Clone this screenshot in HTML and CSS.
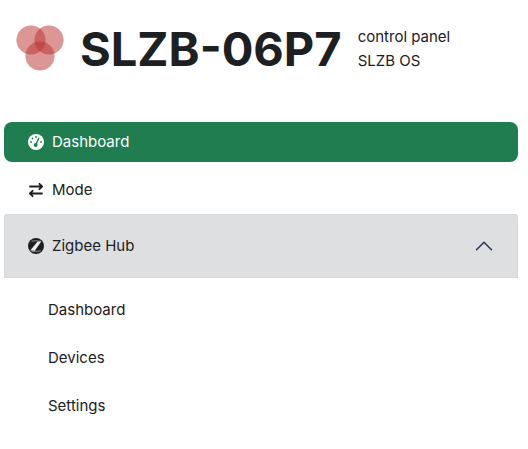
FILE: index.html
```html
<!DOCTYPE html>
<html lang="en">
<head>
  <meta charset="UTF-8" />
  <meta name="viewport" content="width=device-width, initial-scale=1.0" />
  <title>SLZB-06P7</title>
  <link rel="stylesheet" href="styles.css">
</head>
<body>
  <header class="header">
    <svg class="logo" viewBox="0 0 48 48" aria-hidden="true">
      <circle cx="15" cy="15" r="14.6" />
      <circle cx="33" cy="15" r="14.6" />
      <circle cx="24" cy="31" r="14.6" />
    </svg>
    <h1 class="title">SLZB-06P7</h1>
    <div class="subtitle">control panel<br>SLZB OS</div>
  </header>

  <nav class="menu">
    <a class="menu-link active" href="#dashboard">
      <svg class="icon" viewBox="0 0 16 16" aria-hidden="true">
        <circle cx="8" cy="8" r="8" fill="currentColor" />
        <g fill="#1f7d50">
          <circle cx="8" cy="3" r="0.9" />
          <circle cx="4.5" cy="4.5" r="0.9" />
          <circle cx="3" cy="8" r="0.9" />
          <circle cx="13" cy="8" r="0.9" />
          <circle cx="7.7" cy="11" r="1.9" />
        </g>
        <path d="M7.9 10.6 10.7 4.3" stroke="#1f7d50" stroke-width="1.4" stroke-linecap="round" />
      </svg>
      Dashboard
    </a>
    <a class="menu-link" href="#mode">
      <svg class="icon" viewBox="0 0 16 16" fill="none" stroke="currentColor" stroke-width="1.8" stroke-linecap="round" stroke-linejoin="round" aria-hidden="true">
        <path d="M2 4.5h12M11.4 1.8 14.1 4.5 11.4 7.2M14 11.5H2M4.6 8.8 1.9 11.5 4.6 14.2" />
      </svg>
      Mode
    </a>

    <button class="menu-toggle" type="button" aria-expanded="true" aria-controls="zigbee-menu">
      <svg class="icon" viewBox="0 0 16 16" aria-hidden="true">
        <circle cx="8" cy="8" r="8" fill="currentColor" />
        <path d="M3.4 3.2Q7.6 2.4 12.6 3.2M3.6 13.2Q8.5 13.8 12.6 12.8" fill="none" stroke="#dddfe1" stroke-width="0.6" />
        <path d="M9.4 3.8 13.4 3.2 6.8 12.8 2.2 12.6Z" fill="#eeeff0" />
      </svg>
      Zigbee Hub
      <svg class="chevron" viewBox="0 0 20 20" aria-hidden="true">
        <path d="M2.5 13.8 10 6.3l7.5 7.5" />
      </svg>
    </button>
    <div class="submenu" id="zigbee-menu">
      <a class="submenu-link" href="#zigbee-dashboard">Dashboard</a>
      <a class="submenu-link" href="#zigbee-devices">Devices</a>
      <a class="submenu-link" href="#zigbee-settings">Settings</a>
    </div>
  </nav>

  <script>
    const toggle = document.querySelector(".menu-toggle");
    const submenu = document.getElementById("zigbee-menu");

    toggle.addEventListener("click", function() {
      submenu.hidden = !submenu.hidden;
      toggle.setAttribute("aria-expanded", String(!submenu.hidden));
    });
  </script>
</body>
</html>
```
FILE: styles.css
```css
* {
  box-sizing: border-box;
}
body {
  margin: 0;
  font-family: Inter, "Liberation Sans", sans-serif;
  font-size: 15px;
  line-height: 24px;
  color: #1d2023;
  background-color: #fff;
}
.header {
  display: flex;
  align-items: center;
  gap: 16px;
  padding: 21px 16px 0;
}
.logo {
  flex: none;
  width: 48px;
  height: 48px;
  fill: #b9302b;
  fill-opacity: 0.5;
}
.title {
  margin: 0;
  font-size: 47px;
  font-weight: 700;
  line-height: 56px;
}
.menu {
  padding: 45px 10px 0 4px;
}
.menu-link,
.menu-toggle {
  display: flex;
  align-items: center;
  gap: 8px;
  color: #1d2023;
  text-decoration: none;
}
.menu-link {
  padding: 8px 24px;
  margin-bottom: 8px;
  border-radius: 8px;
}
.menu-link.active {
  background-color: #1f7d50;
  color: #fff;
}
.icon {
  flex: none;
  width: 16px;
  height: 16px;
}
.menu-toggle {
  width: 100%;
  margin-top: -4px;
  padding: 20px 24px;
  border: none;
  border-radius: 4px 4px 0 0;
  background-color: #dddfe1;
  box-shadow: inset 0 0 0 1px #d6d9db;
  font: inherit;
  text-align: left;
  cursor: pointer;
}
.chevron {
  width: 20px;
  height: 20px;
  margin-left: auto;
  fill: none;
  stroke: #2b3a5c;
  stroke-width: 1.6;
  stroke-linecap: round;
  stroke-linejoin: round;
}
.menu-toggle[aria-expanded="false"] .chevron {
  transform: rotate(180deg);
}
.submenu {
  padding-top: 12px;
}
.submenu-link {
  display: block;
  padding: 8px 44px;
  margin-bottom: 8px;
  color: #1d2023;
  text-decoration: none;
}
```
